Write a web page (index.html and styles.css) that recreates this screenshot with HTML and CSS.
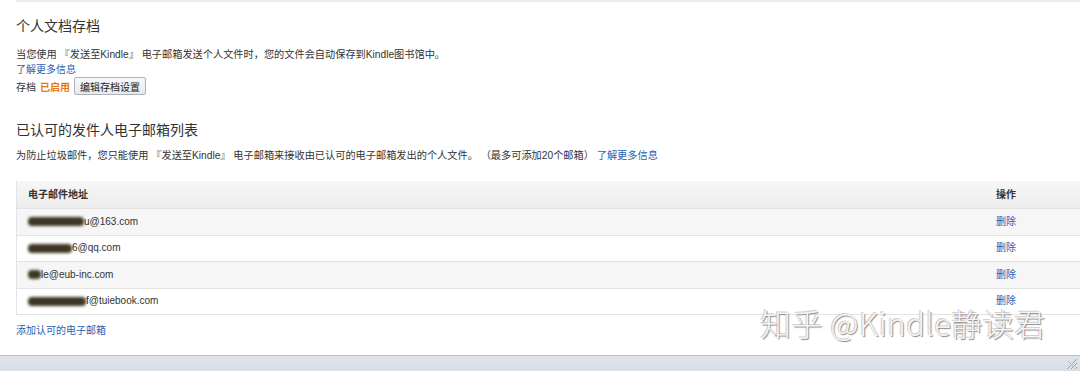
FILE: index.html
```html
<!DOCTYPE html>
<html lang="zh-CN">
  <head>
    <meta charset="UTF-8" />
    <title>个人文档设置</title>
    <link rel="stylesheet" href="styles.css">
  </head>
  <body>
    <div class="page">
      <div class="section">
        <h2>个人文档存档</h2>
        <p class="note">当您使用 『发送至Kindle』 电子邮箱发送个人文件时，您的文件会自动保存到Kindle图书馆中。</p>
        <a class="link" href="#">了解更多信息</a>
        <div class="archive-row">
          <span>存档</span>
          <span class="enabled">已启用</span>
          <button class="btn">编辑存档设置</button>
        </div>
      </div>

      <div class="section second">
        <h2>已认可的发件人电子邮箱列表</h2>
        <p class="note">为防止垃圾邮件，您只能使用 『发送至Kindle』 电子邮箱来接收由已认可的电子邮箱发出的个人文件。 （最多可添加20个邮箱） <a class="link" href="#">了解更多信息</a></p>

        <div class="email-table">
          <div class="row head">
            <div class="cell">电子邮件地址</div>
            <div class="cell action">操作</div>
          </div>
          <div class="row odd">
            <div class="cell"><span class="blur" style="width:56px"></span>u@163.com</div>
            <div class="cell action"><a class="link" href="#">删除</a></div>
          </div>
          <div class="row">
            <div class="cell"><span class="blur" style="width:44px"></span>6@qq.com</div>
            <div class="cell action"><a class="link" href="#">删除</a></div>
          </div>
          <div class="row odd">
            <div class="cell"><span class="blur" style="width:13px"></span>le@eub-inc.com</div>
            <div class="cell action"><a class="link" href="#">删除</a></div>
          </div>
          <div class="row">
            <div class="cell"><span class="blur" style="width:58px"></span>f@tuiebook.com</div>
            <div class="cell action"><a class="link" href="#">删除</a></div>
          </div>
        </div>

        <a class="link add" href="#">添加认可的电子邮箱</a>
      </div>

      <div class="watermark">知乎 @Kindle静读君</div>
    </div>

    <div class="status-bar">
      <svg class="grip" width="14" height="13" viewBox="0 0 14 13">
        <path d="M13 2 L3 12 M13 6 L7 12 M13 10 L11 12" stroke="#9aa3ad" stroke-width="1" fill="none"/>
        <path d="M4 4 L9 9" stroke="#b0b8c2" stroke-width="1" fill="none"/>
      </svg>
    </div>
  </body>
</html>
```

FILE: styles.css
```css
body {
  margin: 0;
  font-family: "Liberation Sans", "Noto Sans CJK SC", sans-serif;
  font-size: 10px;
  color: #333;
  background: #fff;
}
.page {
  position: relative;
  height: 353px;
  margin-left: 16px;
  border-top: 2px solid #ececec;
}
h2 {
  margin: 0;
  font-size: 14px;
  font-weight: normal;
  line-height: 20px;
  color: #333;
}
.section {
  padding-top: 14px;
}
.section.second {
  padding-top: 25px;
}
.note {
  margin: 11px 0 0;
  font-size: 10.2px;
  line-height: 15px;
}
.second .note {
  margin-top: 8px;
}
.link {
  color: #1f5fb1;
  text-decoration: none;
  line-height: 15px;
}
.section > .link {
  display: block;
}
.archive-row {
  display: flex;
  align-items: center;
  gap: 4px;
  margin-top: 0;
}
.enabled {
  color: #e47911;
  font-weight: bold;
}
.btn {
  height: 18px;
  padding: 0 5px;
  font-family: inherit;
  font-size: 10px;
  color: #222;
  border: 1px solid #adb1b8;
  border-radius: 2px;
  background: linear-gradient(#f7f8fa, #e7e9ec);
}
.email-table {
  margin-top: 18px;
  border-left: 1px solid #e3e3e3;
  border-bottom: 1px solid #e3e3e3;
}
.row {
  display: flex;
  align-items: center;
  height: 25.5px;
  line-height: 12px;
  border-top: 1px solid #e3e3e3;
}
.row .link {
  line-height: 12px;
}
.row.head {
  height: 27px;
  border-top: none;
  font-weight: bold;
  background: linear-gradient(#f7f7f7, #ececec);
}
.row.odd {
  background: #f6f6f6;
}
.cell {
  flex: 1;
  display: flex;
  align-items: center;
  padding-left: 11px;
}
.cell.action {
  flex: 0 0 84px;
  padding-left: 0;
}
.blur {
  display: inline-block;
  height: 9px;
  border-radius: 4px;
  background: #3d3622;
  filter: blur(1.5px);
}
.add {
  margin-top: 8px;
}
.watermark {
  position: absolute;
  left: 744px;
  top: 306px;
  font-family: "Noto Sans CJK SC", sans-serif;
  font-size: 31px;
  font-weight: 300;
  line-height: 0.95;
  color: #f4f4f4;
  letter-spacing: 0.5px;
  text-shadow: 1px 1px 1px #8a8a8a, -1px -1px 0 #d0d0d0;
}
.status-bar {
  position: relative;
  height: 15px;
  border-top: 1px solid #b9bcc1;
  background: linear-gradient(#dfe4eb, #d9dee6);
}
.grip {
  position: absolute;
  right: 2px;
  bottom: 1px;
}
```
